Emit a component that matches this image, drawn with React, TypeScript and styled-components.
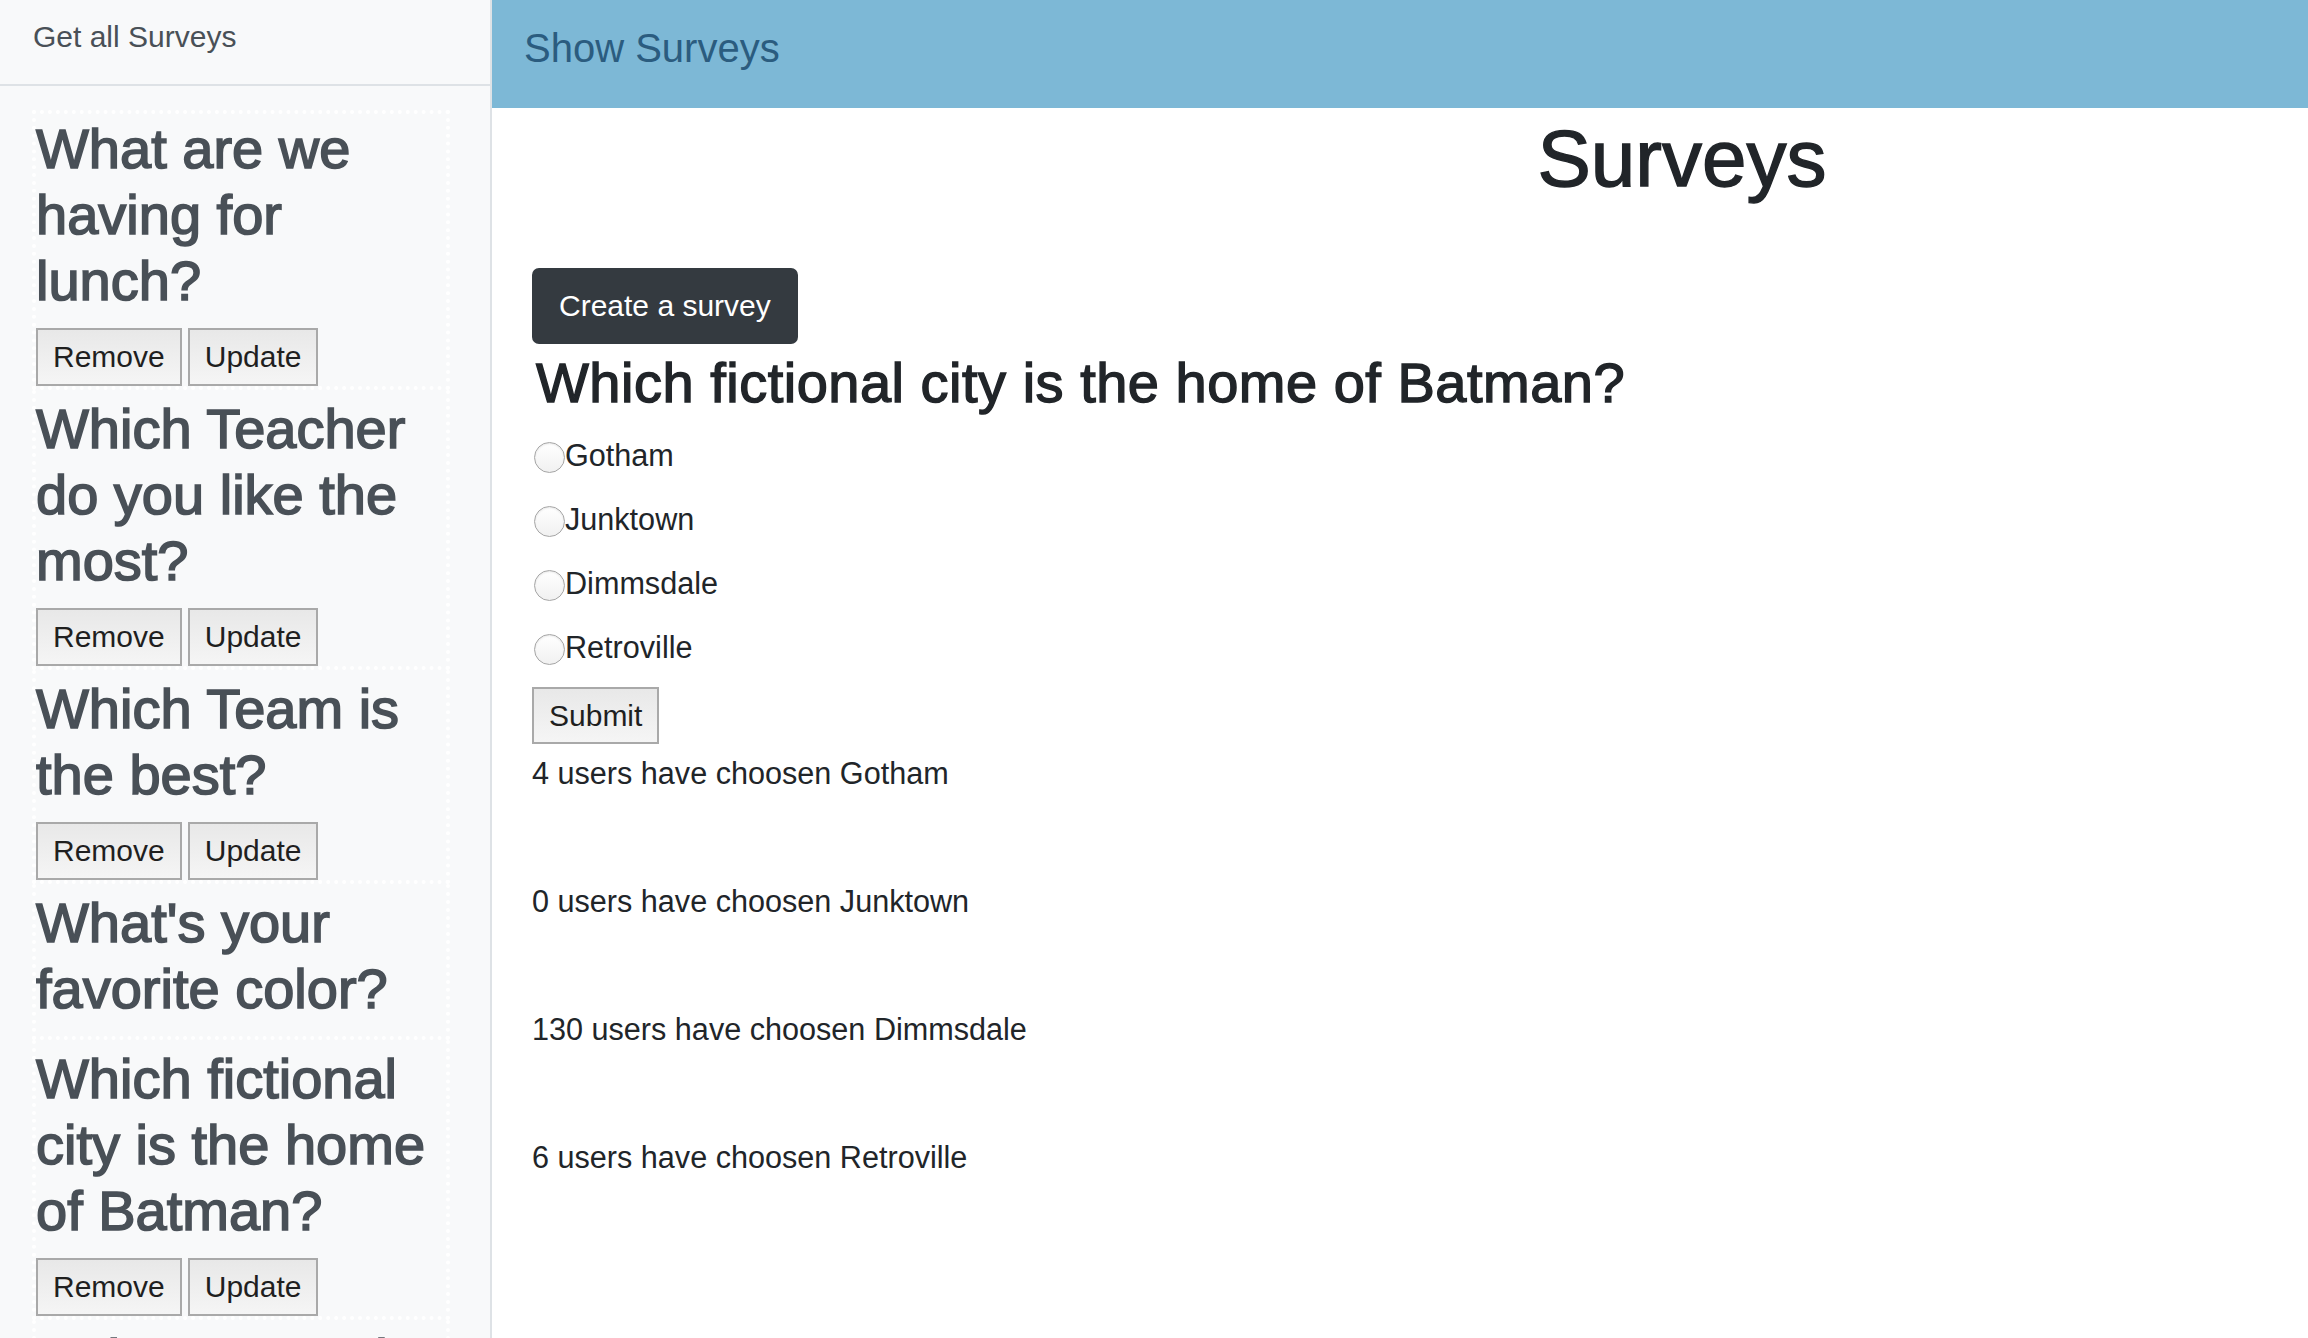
import React from "react";
import styled, { createGlobalStyle } from "styled-components";

const GlobalStyle = createGlobalStyle`
  html, body {
    margin: 0;
    padding: 0;
    height: 100%;
    overflow: hidden;
  }
  body {
    font-family: "Liberation Sans", Arial, Helvetica, sans-serif;
    color: #212529;
    background: #ffffff;
  }
  * { box-sizing: border-box; }
`;

const Layout = styled.div`
  display: flex;
  height: 100vh;
`;

const Sidebar = styled.aside`
  width: 492px;
  flex: none;
  height: 100%;
  overflow: hidden;
  background: #f8f9fa;
  border-right: 2px solid #dee2e6;
  display: flex;
  flex-direction: column;
`;

const SidebarHeader = styled.div`
  flex: none;
  height: 86px;
  padding: 14px 33px 0;
  border-bottom: 2px solid #dee2e6;
  font-size: 30px;
  line-height: 46.5px;
  color: #495057;
`;

const SurveyList = styled.div`
  display: flex;
  flex-direction: column;
  padding: 24px 0 0 32px;
`;

const SurveyCard = styled.div`
  width: 418px;
  border-left: 4px dotted #ffffff;
  border-right: 4px dotted #ffffff;
  border-bottom: 4px dotted #ffffff;
  padding-top: 6px;
  &:first-child {
    border-top: 4px dotted #ffffff;
    padding-top: 2px;
  }
`;

const SurveyTitle = styled.h3`
  margin: 0 0 14px;
  font-size: 56px;
  line-height: 66px;
  font-weight: 500;
  color: #495057;
  -webkit-text-stroke: 1.6px #495057;
`;

const ButtonRow = styled.div`
  display: flex;
  gap: 6px;
`;

const GrayButton = styled.button<{ $h: number }>`
  height: ${(p) => p.$h}px;
  padding: 0 15px;
  border: 2px solid #a9a9a9;
  border-radius: 0;
  background: linear-gradient(#e8e8e8, #f5f5f5);
  color: #1f1f1f;
  font-family: "Liberation Sans", Arial, sans-serif;
  font-size: 30px;
  line-height: 1;
  cursor: pointer;
`;

const Main = styled.main`
  flex: 1;
  min-width: 0;
  display: flex;
  flex-direction: column;
  background: #ffffff;
`;

const Navbar = styled.nav`
  flex: none;
  height: 108px;
  padding: 18px 32px 0;
  background: #7db8d6;
`;

const Brand = styled.a`
  font-size: 40px;
  line-height: 60px;
  color: #2b5c7f;
  text-decoration: none;
`;

const Content = styled.div`
  padding: 0 40px;
`;

const PageTitle = styled.h1`
  margin: 3px 0 61px;
  padding-left: 564px;
  text-align: center;
  font-size: 80px;
  line-height: 96px;
  font-weight: 500;
  color: #212529;
  -webkit-text-stroke: 1.4px #212529;
`;

const PrimaryButton = styled.button`
  display: block;
  height: 76px;
  padding: 0 25px;
  border: 2px solid #343a40;
  border-radius: 7px;
  background: #343a40;
  color: #ffffff;
  font-family: "Liberation Sans", Arial, sans-serif;
  font-size: 30px;
  line-height: 48px;
  cursor: pointer;
`;

const Question = styled.h3`
  margin: 5px 0 15px 4px;
  font-size: 56px;
  line-height: 67.2px;
  font-weight: 500;
  letter-spacing: 0.5px;
  color: #212529;
  -webkit-text-stroke: 1.4px #212529;
`;

const OptionRow = styled.label`
  display: flex;
  align-items: flex-start;
  height: 48px;
  margin-bottom: 16px;
  font-size: 30.6px;
  line-height: 48px;
  color: #212529;
`;

const Radio = styled.input`
  appearance: none;
  -webkit-appearance: none;
  flex: none;
  width: 31px;
  height: 31px;
  margin: 11px 0 0 2px;
  border-radius: 50%;
  border: 1.5px solid #a6a6a6;
  background: linear-gradient(#ffffff, #f1f1f1);
  box-shadow: inset 0 1px 2px rgba(0, 0, 0, 0.1);
`;

const Results = styled.div`
  padding-top: 5px;
`;

const ResultLine = styled.p`
  margin: 0 0 80px;
  font-size: 30.6px;
  line-height: 48px;
  color: #212529;
`;

const surveys = [
  { title: "What are we having for lunch?", actions: true },
  { title: "Which Teacher do you like the most?", actions: true },
  { title: "Which Team is the best?", actions: true },
  { title: "What's your favorite color?", actions: false },
  { title: "Which fictional city is the home of Batman?", actions: true },
  { title: "Coke or Pepsi?", actions: true },
];

const options = ["Gotham", "Junktown", "Dimmsdale", "Retroville"];
const votes = [4, 0, 130, 6];

export default function App() {
  return (
    <>
      <GlobalStyle />
      <Layout>
        <Sidebar>
          <SidebarHeader>Get all Surveys</SidebarHeader>
          <SurveyList>
            {surveys.map((s) => (
              <SurveyCard key={s.title}>
                <SurveyTitle>{s.title}</SurveyTitle>
                {s.actions && (
                  <ButtonRow>
                    <GrayButton $h={58}>Remove</GrayButton>
                    <GrayButton $h={58}>Update</GrayButton>
                  </ButtonRow>
                )}
              </SurveyCard>
            ))}
          </SurveyList>
        </Sidebar>
        <Main>
          <Navbar>
            <Brand href="#">Show Surveys</Brand>
          </Navbar>
          <Content>
            <PageTitle>Surveys</PageTitle>
            <PrimaryButton>Create a survey</PrimaryButton>
            <Question>Which fictional city is the home of Batman?</Question>
            {options.map((o) => (
              <OptionRow key={o}>
                <Radio type="radio" name="city" value={o} />
                {o}
              </OptionRow>
            ))}
            <GrayButton $h={57}>Submit</GrayButton>
            <Results>
              {options.map((o, i) => (
                <ResultLine key={o}>
                  {votes[i]} users have choosen {o}
                </ResultLine>
              ))}
            </Results>
          </Content>
        </Main>
      </Layout>
    </>
  );
}
